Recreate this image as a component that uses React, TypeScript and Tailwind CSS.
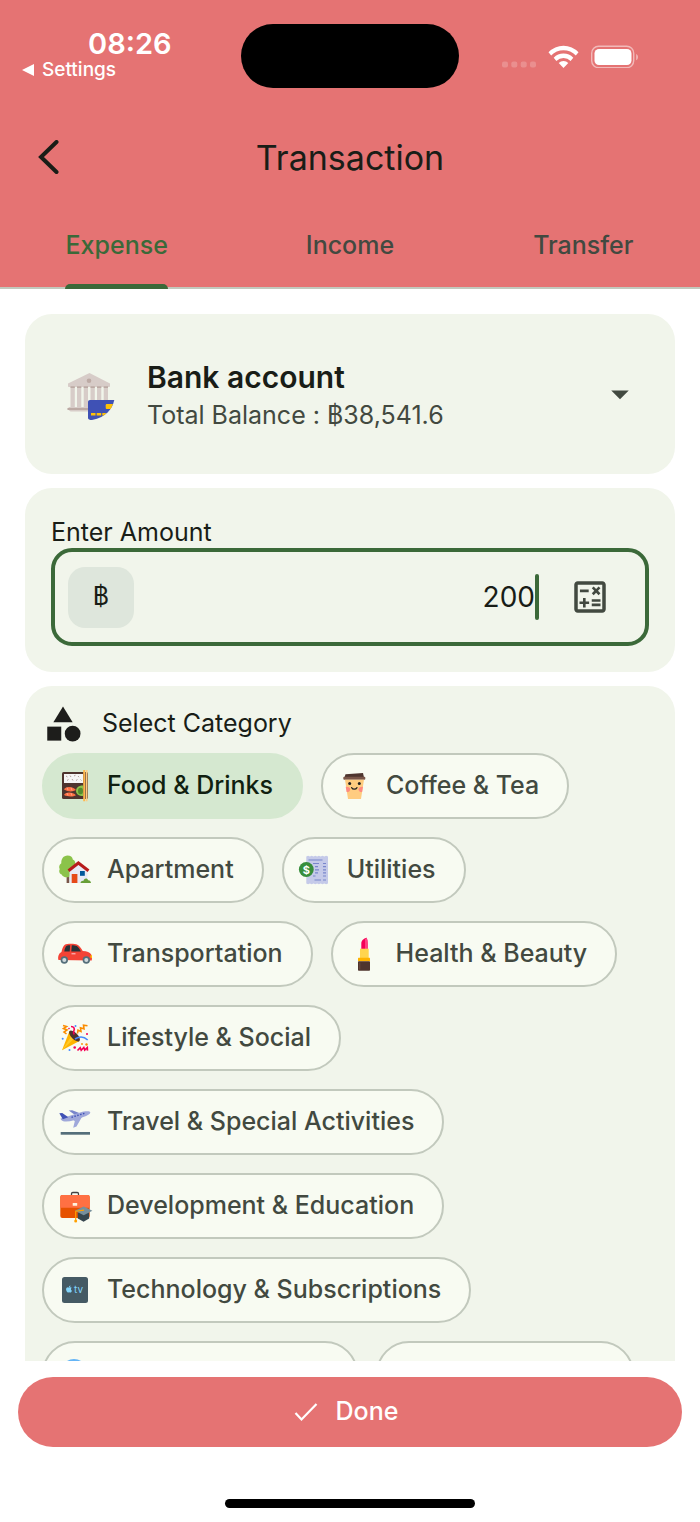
import React, { useState } from "react";
import clsx from "clsx";
import { FaApple } from "react-icons/fa";
import { MdArrowDropDown, MdCategory, MdOutlineCalculate } from "react-icons/md";

type IconProps = { children: React.ReactNode };

const ChipIcon = ({ children }: IconProps) => (
  <svg viewBox="0 0 36 36" className="size-9 shrink-0" aria-hidden="true">
    {children}
  </svg>
);

const BentoIcon = () => (
  <ChipIcon>
    <rect x="5" y="4" width="26" height="27" rx="1.5" fill="#4e342e" />
    <rect x="7" y="6" width="19" height="9" fill="#f5f5f5" />
    <path
      d="M9 8l1.5 1M13 7.5l1 1.5M17 8l1.5-.8M21 8l1 1.2M10 12.5l1.5-1M15 11l1 1.5M19 12.5l1.5-1M23.5 11.5l1 1"
      stroke="#a1887f"
      strokeWidth=".8"
    />
    <path d="M7 21.500c1-3.500 9-3.500 12 .5-3 2-8 2-12-.5zM7 27c1-3.500 9-3.500 12 .2-3 1.700-8 1.700-12-.2z" fill="#ff7043" />
    <path d="M10 19.500l1 2.500M14 19.500l1 3M10 25l1 2.500M14 25l1 2.800" stroke="#ffab91" strokeWidth=".8" />
    <path d="M26 17.500c-5 0-7 2.500-7 5.500s3 5 7 5z" fill="#8bc34a" />
    <ellipse cx="23.500" cy="23" rx="2.500" ry="3.300" fill="#558b2f" />
    <path d="M26.200 2h1.800v31.300h-1.800z" fill="#ffb74d" />
    <path d="M28.600 2h1.900v31.300h-1.900z" fill="#ffcc80" />
  </ChipIcon>
);

const CoffeeIcon = () => (
  <ChipIcon>
    <path d="M9.500 6.300L27 5l1 4.500H8.500z" fill="#4e342e" />
    <rect x="7.300" y="8.800" width="22" height="3" rx="1" fill="#795548" />
    <path d="M9 11.800h19L25 31H12z" fill="#ffcc80" />
    <path d="M9.700 18.800c2.500-.3 4.500.8 4.500 2.700 0 1.700-1.700 2.700-3.600 2.600zM27 18.800c-2.500-.3-4.500.8-4.500 2.700 0 1.700 1.700 2.700 3.600 2.600z" fill="#ff8a80" />
    <circle cx="13.700" cy="15.500" r="1.500" fill="#212121" />
    <circle cx="23.300" cy="15.500" r="1.500" fill="#212121" />
    <path d="M15.700 19.700c1 2 4.200 2 5.200 0" fill="none" stroke="#212121" strokeWidth="1.300" strokeLinecap="round" />
  </ChipIcon>
);

const HouseIcon = () => (
  <ChipIcon>
    <path d="M9.600 20h2.800v11H9.600z" fill="#795548" />
    <path
      d="M10.500 3.600c3 0 5 1.500 5.300 3.800 2.500 1 3.200 3.600 2 6L12 25c-3 1-6.500-.3-7.300-2.500-2-.6-3.200-3-2-5.300-1-2.300-.6-4.700 1.600-6-.3-4 2.200-7.600 6.200-7.600z"
      fill="#8bc34a"
    />
    <path d="M12.500 18.500l9-7.500 9 7.500V31h-18z" fill="#e8eaf6" />
    <path d="M11.500 18.700l9.900-7.700 10.100 7.700" fill="none" stroke="#b71c1c" strokeWidth="3" />
    <rect x="14.700" y="22" width="5.700" height="9" fill="#e64a19" />
    <rect x="23" y="19" width="4.800" height="4.800" fill="#01579b" />
    <path d="M23.500 31c.3-2 1.700-2.600 3-2.300.8-3 4-2.900 4.600-.4 1.600-.2 2.700 1 2.900 2.700z" fill="#689f38" />
  </ChipIcon>
);

const BillIcon = () => (
  <ChipIcon>
    <path
      d="M9.300 4.500l1.800-.8 1.800.8 1.800-.8 1.800.8 1.800-.8 1.800.8 1.800-.8 1.800.8 1.800-.8 1.800.8 1.800-.8 1.900.8v27l-1.900.7-1.800-.7-1.800.7-1.800-.7-1.800.7-1.800-.7-1.800.7-1.800-.7-1.800.7-1.800-.7-1.800.7-1.800-.7z"
      fill="#c5cae9"
    />
    <path
      d="M11.500 8h14M16 11.500h6M18 14.600h3M18 17.800h4M18 20.800h3M16 24h2.500M26 11.500h3M26 14.600h3M26 17.800h3M26 20.800h3M26 24h3M17.500 28h6.500M26 28h3"
      stroke="#7986cb"
      strokeWidth="1.200"
    />
    <circle cx="9.300" cy="17.500" r="7.400" fill="#388e3c" />
    <text x="9.300" y="21.500" textAnchor="middle" fontSize="11" fontWeight="700" fill="#fff">
      $
    </text>
  </ChipIcon>
);

const CarIcon = () => (
  <ChipIcon>
    <path
      d="M1.500 24c-.8-2-.3-6.500 3-8 .6-3 1.600-6 3.300-7.300 2-1.200 10-1.300 12.600 0 2 1 4.300 4.200 5.300 6.300 4.300.3 7.300 1.300 8.300 3.300 1.200 2 1.200 4.500.7 6.200z"
      fill="#f44336"
    />
    <path d="M7.300 15.500c.3-2.500 1.300-5 2.400-5.700.9-.5 2.300-.6 3.500-.6l-.5 6.300zM14.300 15.500l.5-6.300c1.900 0 3.900.1 5 .8 1.500.9 3 3.200 4 5.500z" fill="#263238" />
    <path d="M14.500 17.800h4" stroke="#ffcdd2" strokeWidth="1" />
    <path d="M34 18.500c1.200.7 1.300 2.700.7 3.700l-1.500-1z" fill="#ffc107" />
    <circle cx="7.300" cy="24" r="3.700" fill="#546e7a" />
    <circle cx="7.300" cy="24" r="2" fill="#cfd8dc" />
    <circle cx="29.300" cy="24" r="3.700" fill="#546e7a" />
    <circle cx="29.300" cy="24" r="2" fill="#cfd8dc" />
  </ChipIcon>
);

const LipstickIcon = () => (
  <ChipIcon>
    <path d="M15.300 13V7c0-2.500 3-5 5.500-5.300.6 2 .9 4 .9 6V13z" fill="#f50057" />
    <path d="M19 13V3l1.800-1.300c.6 2 .9 4 .9 6V13z" fill="#ff4081" />
    <rect x="14" y="12.700" width="8.700" height="9.300" fill="#ffd54f" />
    <rect x="12" y="21.700" width="12" height="3.600" rx=".5" fill="#ffb300" />
    <rect x="12" y="25.200" width="12" height="9.500" rx=".8" fill="#4e342e" />
    <path d="M13.800 26.500v7" stroke="#6d4c41" strokeWidth="1" />
  </ChipIcon>
);

const PartyIcon = () => (
  <ChipIcon>
    <path d="M5 30.300L12.500 11l10 10z" fill="#ffb300" />
    <path d="M5 30.300l10.500-16 3 3z" fill="#ffca28" />
    <ellipse cx="17.500" cy="16" rx="7" ry="3.200" transform="rotate(45 17.500 16)" fill="#4e342e" />
    <g fill="none" strokeWidth="1.600">
      <path d="M6 5.500l3.500 1-3 2 3.500 1.500-3 2 2.500 2M20.500 13.500l.5-3.300 3 1.300-.5-3.700 3.500 1-.5-3.600 4 .6" stroke="#fb8c00" />
      <path d="M14 6.500c3 0 4 2 2.800 4.500-.5 1.300-.4 2.400.5 3.500" stroke="#f50057" />
      <path d="M18 19c4-2.500 9-2.500 12.700 1" stroke="#448aff" />
      <path d="M20.500 30.500l2.700-2.800 1 2.500 2.600-2.700.9 2.600 2.600-2.500.2 3" stroke="#f50057" />
    </g>
    <g fill="#448aff">
      <circle cx="5.700" cy="18.700" r="1" />
      <circle cx="18.500" cy="6" r="1" />
      <circle cx="12.500" cy="30" r="1" />
    </g>
    <g fill="#f50057">
      <circle cx="30" cy="14" r="1" />
      <circle cx="17.700" cy="27.500" r="1.300" />
      <circle cx="12" cy="8.500" r=".8" />
    </g>
    <g fill="#fb8c00">
      <circle cx="29.500" cy="24.500" r="1.200" />
      <circle cx="25" cy="24" r=".9" />
    </g>
  </ChipIcon>
);

const PlaneIcon = () => (
  <ChipIcon>
    <path d="M11.700 6.500l3.500-.3 9 3.500-5 2z" fill="#7986cb" />
    <path d="M3.500 14.500c8-1.500 17-6 25-7.200 2.600-.3 4.800 0 4.800 1.200 0 1.500-3 3-7 4.500-7 2.800-14 5-18.500 4.500-2.300-.3-4-1.300-4.300-3z" fill="#9fa8da" />
    <path d="M2.300 9.200l3-.3 6 4.300-5.500 2z" fill="#3f51b5" />
    <path d="M16.500 16l9-4-6 10.500-3.300 1.300 1.600-6.500z" fill="#9fa8da" />
    <path d="M14.500 13.300l14-4.300" stroke="#3f51b5" strokeWidth="1.400" strokeDasharray="1.500 1.500" />
    <rect x="3.700" y="28" width="29.300" height="2.700" fill="#546e7a" />
  </ChipIcon>
);

const BriefcaseIcon = () => (
  <ChipIcon>
    <path d="M14.500 7.500V5.800c0-.8.500-1.300 1.300-1.300h4.400c.8 0 1.300.5 1.300 1.300v1.700" fill="none" stroke="#424242" strokeWidth="1.300" />
    <rect x="3.300" y="7" width="29.400" height="23" rx="2" fill="#e65100" />
    <path d="M5.300 7h25.400c1.200 0 2 .8 2 2v10.700H3.300V9c0-1.200.8-2 2-2z" fill="#ff7043" />
    <rect x="15.700" y="15" width="4.500" height="2.700" rx=".5" fill="#fff3e0" />
    <path d="M20.800 24.500v6l5.800 3.300 5.500-3.300v-6z" fill="#37474f" />
    <path d="M18 22.700l8.700-4.200 8.700 4.200-8.700 4.600z" fill="#78909c" />
    <path d="M27 22.200l-8.300 1V32" fill="none" stroke="#ffa000" strokeWidth="1.200" />
    <circle cx="18.700" cy="33" r="1.500" fill="#ffa000" />
  </ChipIcon>
);

const TvIcon = () => (
  <ChipIcon>
    <rect x="5" y="5" width="26" height="26" rx="2.500" fill="#455a64" />
    <FaApple x="8" y="13" size={8} color="#81d4fa" />
    <text x="17" y="21" fontSize="10" fontWeight="400" fill="#81d4fa">
      tv
    </text>
  </ChipIcon>
);

const BlueIcon = () => (
  <ChipIcon>
    <circle cx="17" cy="16" r="13" fill="#64b5f6" />
  </ChipIcon>
);

const BankIcon = () => (
  <svg viewBox="0 -6 48 54" className="h-[54px] w-12 shrink-0" aria-hidden="true">
    <path d="M1 10.500L22.500 0 43 10.500v2.500c0 .6-.4 1-1 1H2c-.6 0-1-.4-1-1z" fill="#d7ccc8" />
    <circle cx="22" cy="7.700" r="2.300" fill="#bcaaa4" />
    <path d="M3.500 14h4.300v21H3.500zM10 14h4.300v21H10zM16.700 14H21v21h-4.300zM23.500 14h4.300v21h-4.300zM30 14h4.300v21H30zM36.700 14H41v21h-4.300z" fill="#d7ccc8" />
    <path d="M3.500 13.300h4.300V15H3.500zM10 13.300h4.300V15H10zM16.700 13.300H21V15h-4.300zM23.500 13.300h4.300V15h-4.300zM30 13.300h4.300V15H30zM36.700 13.300H41V15h-4.300z" fill="#bcaaa4" />
    <path d="M2 34h22v4.500H3.500L.5 36z" fill="#d7ccc8" />
    <path d="M.5 35h23v2H.5z" fill="#bcaaa4" />
    <path d="M23 27h24.300c-2 9-8 17-22.300 20-1.500.2-4-.5-4-2V29c0-1.200.8-2 2-2z" fill="#3f51b5" />
    <path d="M40 31h6l-2.300 5H40c-.8 0-1.300-.5-1.300-1.300v-2.400c0-.8.500-1.300 1.300-1.300z" fill="#ffc107" />
    <path d="M24 40h4.500v2.500H24zM29.700 40h4.500v2.500h-4.500zM35.300 40h4.200l-2.700 2.500h-1.500z" fill="#ffc107" />
  </svg>
);

const StatusBar = () => (
  <div className="grid grid-cols-[1fr_218px_1fr] pt-6 text-white">
    <div className="pt-[6px]">
      <p className="pl-[88px] text-[29px] leading-7 font-semibold">08:26</p>
      <a href="#settings" className="flex items-center gap-2 pl-[22px] text-[19px] leading-6 font-medium">
        <svg viewBox="0 0 12 12" className="size-3" aria-hidden="true">
          <path d="M0 6L12 0v12z" fill="currentColor" />
        </svg>
        Settings
      </a>
    </div>
    <div className="h-16 rounded-full bg-black" />
    <div className="flex items-center justify-end pr-[61px]">
      <svg viewBox="0 0 138 24" className="h-6 w-[138px]" fill="#fff" aria-hidden="true">
        <g opacity=".2">
          <rect x="1" y="17.500" width="6" height="6" rx="2" />
          <rect x="10.300" y="17.500" width="6" height="6" rx="2" />
          <rect x="19.700" y="17.500" width="6" height="6" rx="2" />
          <rect x="29" y="17.500" width="6" height="6" rx="2" />
        </g>
        <path d="M47.500 8.300a20.500 20.500 0 0 1 30 0l-2.700 3.200a17 17 0 0 0-24.600 0z" />
        <path d="M52.700 13.700a13.600 13.600 0 0 1 19.600 0L69.600 17a10.200 10.200 0 0 0-14.200 0z" />
        <path d="M57.700 19a6.800 6.800 0 0 1 9.600 0L62.500 24z" />
        <rect x="90.700" y="2.200" width="42" height="21.500" rx="7" fill="none" stroke="#fff" strokeWidth="1.400" opacity=".5" />
        <rect x="93.500" y="5" width="37" height="16" rx="4.500" />
        <path d="M135.300 10c2 .7 2 5.500 0 6.200z" opacity=".6" />
      </svg>
    </div>
  </div>
);

const tabs = ["Expense", "Income", "Transfer"];

const categories = [
  { name: "Food & Drinks", Icon: BentoIcon },
  { name: "Coffee & Tea", Icon: CoffeeIcon },
  { name: "Apartment", Icon: HouseIcon },
  { name: "Utilities", Icon: BillIcon },
  { name: "Transportation", Icon: CarIcon },
  { name: "Health & Beauty", Icon: LipstickIcon },
  { name: "Lifestyle & Social", Icon: PartyIcon },
  { name: "Travel & Special Activities", Icon: PlaneIcon },
  { name: "Development & Education", Icon: BriefcaseIcon },
  { name: "Technology & Subscriptions", Icon: TvIcon },
];

const App = () => {
  const [tab, setTab] = useState("Expense");
  const [category, setCategory] = useState("Food & Drinks");
  const [amount, setAmount] = useState("200");

  return (
    <div className="flex h-screen flex-col bg-white font-[Inter,sans-serif] text-[#191d17]">
      <header className="border-b-2 border-[#c2c9bd] bg-[#e57373]">
        <StatusBar />
        <div className="grid h-[116px] grid-cols-[1fr_auto_1fr] items-center px-9 pt-6">
          <button aria-label="Back" className="justify-self-start">
            <svg viewBox="0 0 26 36" className="h-9 w-[26px]" aria-hidden="true">
              <path d="M20.500 2L5 17l15.500 15" fill="none" stroke="currentColor" strokeWidth="4" strokeLinecap="round" strokeLinejoin="miter" />
            </svg>
          </button>
          <h1 className="text-[34px] leading-[44px]">Transaction</h1>
        </div>
        <nav className="grid h-[83px] grid-cols-3">
          {tabs.map((name) => (
            <button
              key={name}
              onClick={() => setTab(name)}
              className={clsx(
                "flex justify-center text-[25px] font-medium",
                tab === name ? "text-[#3b6939]" : "text-[#424940]"
              )}
            >
              <span className="relative flex h-full items-center">
                {name}
                {tab === name && (
                  <span className="absolute inset-x-0 -bottom-0.5 h-[5px] rounded-t-[5px] bg-[#3b6939]" />
                )}
              </span>
            </button>
          ))}
        </nav>
      </header>

      <main className="flex min-h-0 flex-1 flex-col gap-3.5 overflow-y-auto px-[25px] pt-[25px] [scrollbar-width:none]">
        <button
          aria-haspopup="listbox"
          className="flex h-40 shrink-0 items-center rounded-[27px] bg-[#f1f5eb] pr-[34px] pl-[42px] text-left"
        >
          <BankIcon />
          <span className="ml-8 flex-1 pt-1">
            <span className="block text-[30px] leading-[38px] font-semibold">Bank account</span>
            <span className="block text-[25px] leading-[38px] text-[#424940]">
              Total Balance : ฿38,541.6
            </span>
          </span>
          <MdArrowDropDown className="size-[42px] text-[#424940]" />
        </button>

        <section className="shrink-0 rounded-[27px] bg-[#f1f5eb] px-[26px] pt-7 pb-[26px]">
          <label htmlFor="amount" className="block text-[25px] leading-8">
            Enter Amount
          </label>
          <div className="flex h-[98px] items-center rounded-[21px] border-4 border-[#3b6939] pr-[34px] pl-[13px]">
            <span className="flex h-[61px] w-[66px] items-center justify-center rounded-[17px] bg-[#dee6dc] text-[25px]">
              ฿
            </span>
            <input
              id="amount"
              inputMode="decimal"
              value={amount}
              onChange={(e) => setAmount(e.target.value)}
              className="min-w-0 flex-1 text-right text-[28px] caret-transparent outline-none"
            />
            <span className="h-[46px] w-1 rounded-full bg-[#3b6939]" />
            <button aria-label="Calculator" className="ml-[30px] text-[#424940]">
              <MdOutlineCalculate className="size-[42px]" />
            </button>
          </div>
        </section>

        <section className="shrink-0 rounded-t-[27px] bg-[#f1f5eb] px-[17px] pt-[17px] pb-6">
          <h2 className="mb-2 flex items-center gap-[18px] text-[25px]">
            <MdCategory className="size-[42px] text-[#1d1d1b]" />
            Select Category
          </h2>
          <div className="flex flex-wrap gap-[18px]">
            {categories.map(({ name, Icon }) => (
              <button
                key={name}
                onClick={() => setCategory(name)}
                className={clsx(
                  "flex h-[66px] items-center gap-3.5 rounded-full border-2 pr-7 pl-[13px] text-[25px] font-medium",
                  category === name
                    ? "border-[#d5e8d0] bg-[#d5e8d0] text-[#101f10]"
                    : "border-[#c2c9bd] bg-[#f8fbf2] text-[#424940]"
                )}
              >
                <Icon />
                {name}
              </button>
            ))}
            <button
              aria-label="More categories"
              className="flex h-[66px] w-[316px] items-center rounded-full border-2 border-[#c2c9bd] bg-[#f8fbf2] pl-[13px]"
            >
              <BlueIcon />
            </button>
            <button
              aria-label="Add category"
              className="h-[66px] w-[258px] rounded-full border-2 border-[#c2c9bd] bg-[#f8fbf2]"
            />
          </div>
        </section>
      </main>

      <footer className="flex flex-col items-center px-[18px] pt-4 pb-3.5">
        <button className="flex h-[70px] w-full items-center justify-center gap-[18px] rounded-full bg-[#e57373] pr-2 text-[25px] font-medium text-white">
          <svg viewBox="0 0 24 24" className="size-6" aria-hidden="true">
            <path d="M1.500 13l6 6.500L22.500 4" fill="none" stroke="currentColor" strokeWidth="2.200" />
          </svg>
          Done
        </button>
        <div className="mt-[52px] h-[9px] w-[250px] rounded-full bg-black" />
      </footer>
    </div>
  );
};

export default App;
